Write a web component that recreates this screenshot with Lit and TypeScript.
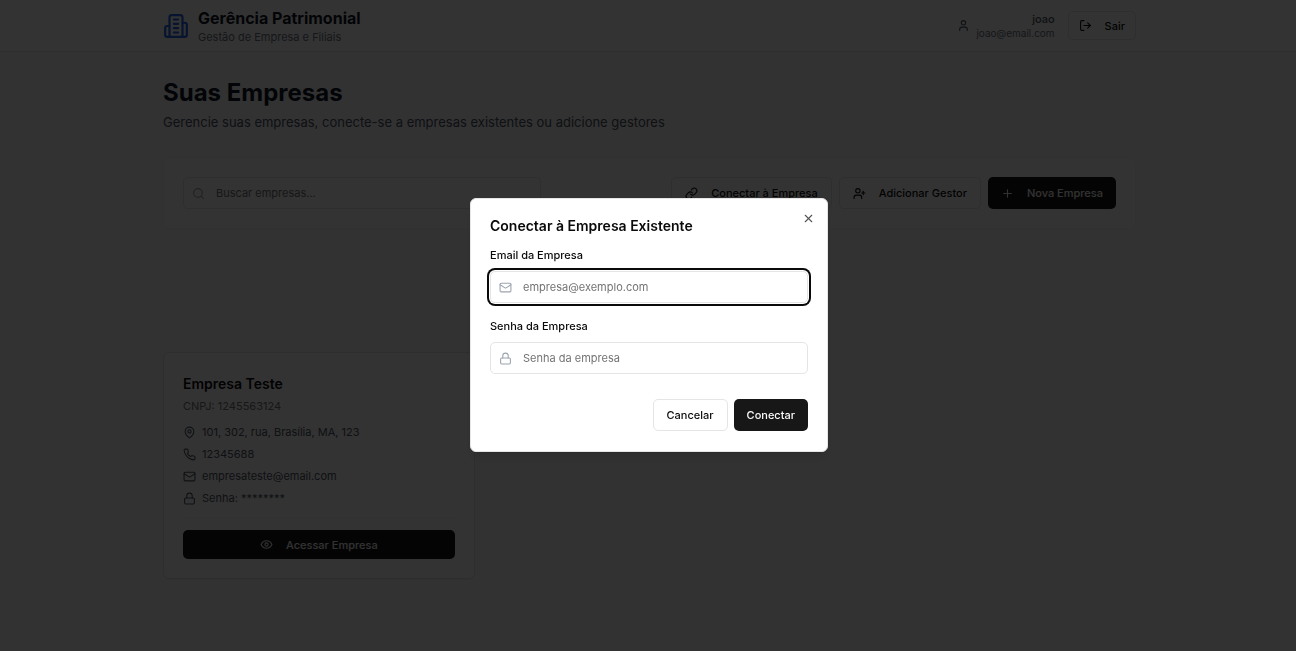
import { LitElement, html, css, svg } from "lit";
import { customElement, property } from "lit/decorators.js";

const ICONS: Record<string, unknown> = {
  building: svg`<path d="M6 22V4a2 2 0 0 1 2-2h8a2 2 0 0 1 2 2v18Z"/><path d="M6 12H4a2 2 0 0 0-2 2v6a2 2 0 0 0 2 2h2"/><path d="M18 9h2a2 2 0 0 1 2 2v9a2 2 0 0 1-2 2h-2"/><path d="M10 6h4"/><path d="M10 10h4"/><path d="M10 14h4"/><path d="M10 18h4"/>`,
  user: svg`<path d="M19 21v-2a4 4 0 0 0-4-4H9a4 4 0 0 0-4 4v2"/><circle cx="12" cy="7" r="4"/>`,
  logout: svg`<path d="M9 21H5a2 2 0 0 1-2-2V5a2 2 0 0 1 2-2h4"/><polyline points="16 17 21 12 16 7"/><line x1="21" x2="9" y1="12" y2="12"/>`,
  search: svg`<circle cx="11" cy="11" r="8"/><path d="m21 21-4.3-4.3"/>`,
  link: svg`<path d="M10 13a5 5 0 0 0 7.54.54l3-3a5 5 0 0 0-7.07-7.07l-1.72 1.71"/><path d="M14 11a5 5 0 0 0-7.54-.54l-3 3a5 5 0 0 0 7.07 7.07l1.71-1.71"/>`,
  userPlus: svg`<path d="M16 21v-2a4 4 0 0 0-4-4H6a4 4 0 0 0-4 4v2"/><circle cx="9" cy="7" r="4"/><line x1="19" x2="19" y1="8" y2="14"/><line x1="22" x2="16" y1="11" y2="11"/>`,
  plus: svg`<path d="M5 12h14"/><path d="M12 5v14"/>`,
  pin: svg`<path d="M20 10c0 6-8 12-8 12s-8-6-8-12a8 8 0 0 1 16 0Z"/><circle cx="12" cy="10" r="3"/>`,
  phone: svg`<path d="M22 16.92v3a2 2 0 0 1-2.18 2 19.79 19.79 0 0 1-8.63-3.07 19.5 19.5 0 0 1-6-6 19.79 19.79 0 0 1-3.07-8.67A2 2 0 0 1 4.11 2h3a2 2 0 0 1 2 1.72 12.84 12.84 0 0 0 .7 2.81 2 2 0 0 1-.45 2.11L8.09 9.91a16 16 0 0 0 6 6l1.27-1.27a2 2 0 0 1 2.11-.45 12.84 12.84 0 0 0 2.81.7A2 2 0 0 1 22 16.92z"/>`,
  mail: svg`<rect width="20" height="16" x="2" y="4" rx="2"/><path d="m22 7-8.97 5.7a1.94 1.94 0 0 1-2.06 0L2 7"/>`,
  lock: svg`<rect width="18" height="11" x="3" y="11" rx="2" ry="2"/><path d="M7 11V7a5 5 0 0 1 10 0v4"/>`,
  eye: svg`<path d="M2 12s3-7 10-7 10 7 10 7-3 7-10 7-10-7-10-7Z"/><circle cx="12" cy="12" r="3"/>`,
  close: svg`<path d="M18 6 6 18"/><path d="m6 6 12 12"/>`,
};

@customElement("app-icon")
class AppIcon extends LitElement {
  @property() name = "";

  static styles = css`
    :host { display: block; flex: none; width: 13px; height: 13px; }
    svg { display: block; width: 100%; height: 100%; }
  `;

  render() {
    return html`<svg viewBox="0 0 24 24" fill="none" stroke="currentColor" stroke-width="2"
      stroke-linecap="round" stroke-linejoin="round" aria-hidden="true">${ICONS[this.name]}</svg>`;
  }
}

@customElement("app-root")
class AppRoot extends LitElement {
  static styles = css`
    :host {
      display: block;
      min-height: 100vh;
      background: #f9fafb;
      color: #0a0a0a;
      font: 400 11px/16px Inter, sans-serif;
    }
    * { box-sizing: border-box; }
    h1, h2, h3, p, ul { margin: 0; padding: 0; }
    button, input { font: inherit; color: inherit; margin: 0; }
    .container { max-width: 1024px; margin: 0 auto; padding: 0 24px 0 27px; }

    .topbar { background: #fff; border-bottom: 1px solid #e5e7eb; }
    .topbar-row { display: flex; align-items: flex-start; justify-content: space-between; padding-top: 7px; padding-bottom: 6px; }
    .brand { display: flex; align-items: center; gap: 9px; }
    .logo { width: 26px; height: 26px; color: #2563eb; }
    .brand-name { font-size: 16px; line-height: 22px; font-weight: 700; color: #111827; }
    .brand-sub { color: #6b7280; }
    .account { display: flex; align-items: center; gap: 13px; padding-top: 4px; }
    .user { display: flex; align-items: center; gap: 6px; color: #4b5563; }
    .user-text { text-align: right; }
    .user-name { line-height: 16px; font-weight: 500; }
    .user-mail { font-size: 10px; line-height: 13px; color: #6b7280; }

    .btn {
      display: inline-flex; align-items: center; justify-content: center; gap: 13px;
      height: 32px; padding: 0 13px; border: 1px solid #e5e5e5; border-radius: 5px;
      background: #fff; color: #0a0a0a; font-weight: 500; white-space: nowrap; cursor: pointer;
    }
    .btn.small { height: 29px; padding: 0 10px; }
    .btn.primary { background: #171717; color: #fafafa; border: 0; }

    .page-title { padding-top: 26px; font-size: 24px; line-height: 29px; font-weight: 700; color: #111827; }
    .page-sub { margin-top: 6px; font-size: 13px; line-height: 19px; color: #4b5563; }

    .panel { background: #fff; border: 1px solid #f3f4f6; border-radius: 6px; padding: 19px; }
    .toolbar { display: flex; align-items: center; justify-content: space-between; gap: 19px; margin-top: 25px; }
    .actions { display: flex; gap: 7px; }
    .search { flex: 0 1 358px; }

    .field { display: grid; align-items: center; }
    .field > * { grid-area: 1 / 1; }
    .field app-icon { z-index: 1; margin-left: 9px; color: #9ca3af; pointer-events: none; }
    .input {
      width: 100%; height: 32px; padding: 0 10px 0 32px; border: 1px solid #e5e5e5;
      border-radius: 5px; background: #fff; outline: none;
    }
    .input::placeholder { color: #737373; opacity: 1; }
    .input.active { box-shadow: 0 0 0 1px #fff, 0 0 0 3px #0a0a0a; }

    .companies { display: grid; grid-template-columns: repeat(3, 1fr); gap: 19px; margin-top: 123px; padding-bottom: 26px; }
    .company { border-color: #e5e5e5; box-shadow: 0 1px 2px rgba(0, 0, 0, 0.05); }
    .company-name { font-size: 14px; line-height: 24px; font-weight: 600; }
    .company-id { margin-top: 2px; color: #737373; }
    .details { display: grid; gap: 6px; margin-top: 10px; list-style: none; color: #4b5563; }
    .details li { display: flex; align-items: center; gap: 6px; }
    .company-foot { display: grid; margin-top: 11px; padding-top: 12px; border-top: 1px solid #f3f4f6; }

    .overlay {
      position: fixed; inset: 0; z-index: 10; display: grid; place-items: center;
      padding: 0 0 1px 2px; background: rgba(0, 0, 0, 0.8);
    }
    .dialog {
      position: relative; width: 100%; max-width: 358px; padding: 19px 19px 20px;
      border: 1px solid #e5e5e5; border-radius: 6px; background: #fff;
      box-shadow: 0 8px 12px -2px rgba(0, 0, 0, 0.1), 0 3px 5px -3px rgba(0, 0, 0, 0.1);
    }
    .dialog-title { font-size: 14px; line-height: 16px; font-weight: 600; }
    .close { position: absolute; top: 13px; right: 12px; padding: 0; border: 0; background: none; opacity: 0.7; cursor: pointer; }
    .form { display: grid; gap: 15px; margin-top: 13px; }
    .form-item { display: grid; gap: 8px; }
    .label { font-weight: 500; }
    .form-actions { display: flex; justify-content: flex-end; gap: 6px; margin-top: 10px; }
  `;

  private details = [
    { icon: "pin", text: "101, 302, rua, Brasília, MA, 123" },
    { icon: "phone", text: "12345688" },
    { icon: "mail", text: "empresateste@email.com" },
    { icon: "lock", text: "Senha: ********" },
  ];

  render() {
    return html`
      <header class="topbar">
        <div class="container topbar-row">
          <div class="brand">
            <app-icon class="logo" name="building"></app-icon>
            <div>
              <h1 class="brand-name">Gerência Patrimonial</h1>
              <p class="brand-sub">Gestão de Empresa e Filiais</p>
            </div>
          </div>
          <div class="account">
            <div class="user">
              <app-icon name="user"></app-icon>
              <div class="user-text">
                <p class="user-name">joao</p>
                <p class="user-mail">joao@email.com</p>
              </div>
            </div>
            <button class="btn small"><app-icon name="logout"></app-icon>Sair</button>
          </div>
        </div>
      </header>

      <main class="container">
        <h2 class="page-title">Suas Empresas</h2>
        <p class="page-sub">Gerencie suas empresas, conecte-se a empresas existentes ou adicione gestores</p>

        <section class="panel toolbar">
          <div class="field search">
            <app-icon name="search"></app-icon>
            <input class="input" type="search" aria-label="Buscar empresas" placeholder="Buscar empresas..." />
          </div>
          <div class="actions">
            <button class="btn"><app-icon name="link"></app-icon>Conectar à Empresa</button>
            <button class="btn"><app-icon name="userPlus"></app-icon>Adicionar Gestor</button>
            <button class="btn primary"><app-icon name="plus"></app-icon>Nova Empresa</button>
          </div>
        </section>

        <section class="companies">
          <article class="panel company">
            <h3 class="company-name">Empresa Teste</h3>
            <p class="company-id">CNPJ: 1245563124</p>
            <ul class="details">
              ${this.details.map((d) => html`<li><app-icon name=${d.icon}></app-icon><span>${d.text}</span></li>`)}
            </ul>
            <div class="company-foot">
              <button class="btn small primary"><app-icon name="eye"></app-icon>Acessar Empresa</button>
            </div>
          </article>
        </section>
      </main>

      <div class="overlay">
        <div class="dialog" role="dialog" aria-modal="true" aria-labelledby="dialog-title">
          <h2 class="dialog-title" id="dialog-title">Conectar à Empresa Existente</h2>
          <form class="form" @submit=${(e: Event) => e.preventDefault()}>
            <div class="form-item">
              <label class="label" for="email">Email da Empresa</label>
              <div class="field">
                <app-icon name="mail"></app-icon>
                <input class="input active" id="email" type="email" placeholder="empresa@exemplo.com" />
              </div>
            </div>
            <div class="form-item">
              <label class="label" for="password">Senha da Empresa</label>
              <div class="field">
                <app-icon name="lock"></app-icon>
                <input class="input" id="password" type="password" placeholder="Senha da empresa" />
              </div>
            </div>
            <div class="form-actions">
              <button class="btn" type="button">Cancelar</button>
              <button class="btn primary" type="submit">Conectar</button>
            </div>
          </form>
          <button class="close" aria-label="Fechar"><app-icon name="close"></app-icon></button>
        </div>
      </div>
    `;
  }
}
